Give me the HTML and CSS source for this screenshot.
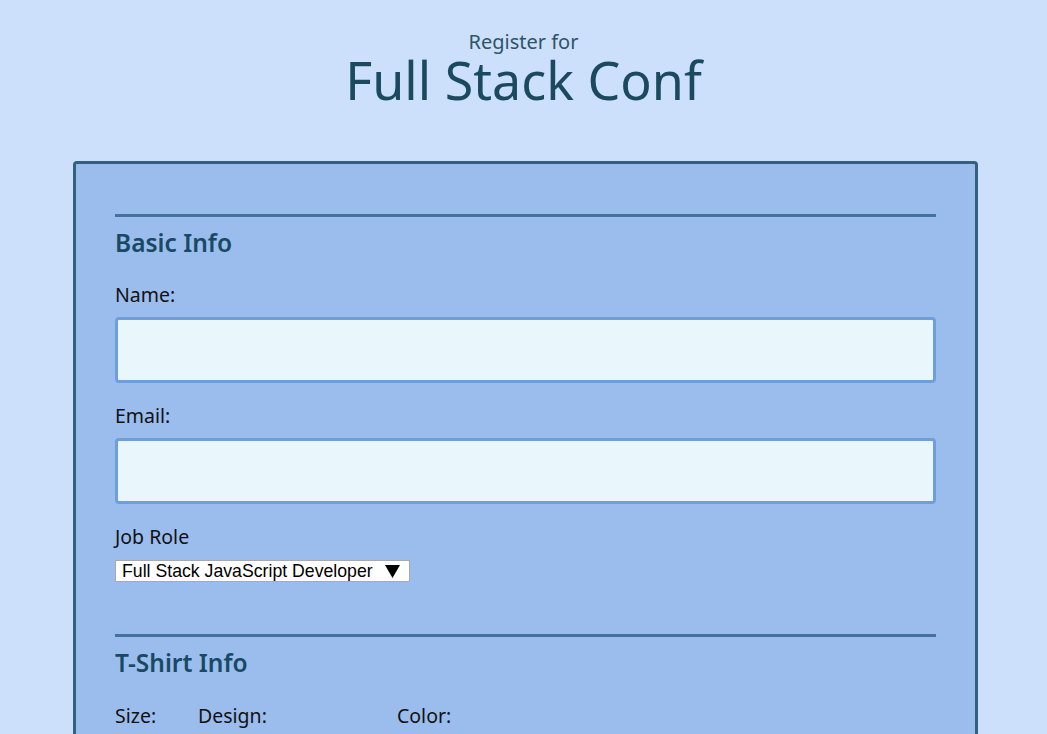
FILE: index.html
```html
<!DOCTYPE html>
<html lang="en">
<head>
<meta charset="utf-8">
<title>Register for Full Stack Conf</title>
<link rel="stylesheet" href="styles.css">
</head>
<body>
<header class="header">
  <span class="header-sub">Register for</span>
  <h1 class="header-title">Full Stack Conf</h1>
</header>
<form class="form">
  <fieldset class="section">
    <h2 class="section-title">Basic Info</h2>
    <label class="label" for="name">Name:</label>
    <input class="text-input" id="name" type="text">
    <label class="label" for="email">Email:</label>
    <input class="text-input" id="email" type="email">
    <label class="label" for="title">Job Role</label>
    <div class="select-box">
      <span class="select-text">Full Stack JavaScript Developer</span>
      <svg class="select-arrow" width="15" height="13" viewBox="0 0 15 13" aria-hidden="true"><path d="M0 0H15L7.5 13Z" fill="#000"/></svg>
    </div>
  </fieldset>
  <fieldset class="section">
    <h2 class="section-title">T-Shirt Info</h2>
    <div class="shirt-row">
      <span class="label shirt-size">Size:</span>
      <span class="label shirt-design">Design:</span>
      <span class="label shirt-color">Color:</span>
    </div>
  </fieldset>
</form>
</body>
</html>
```
FILE: styles.css
```css
html, body {
  margin: 0;
  padding: 0;
}
body {
  background: #cce0fb;
  font-family: "Noto Sans", "Lato", sans-serif;
  color: #000;
}
.header {
  display: flex;
  flex-direction: column;
  align-items: center;
  padding-top: 30px;
  color: #1f4b5e;
}
.header-sub {
  font-size: 20px;
  line-height: 24px;
  color: #2e5466;
}
.header-title {
  margin: 0;
  font-weight: 400;
  font-size: 52px;
  line-height: 52px;
  color: #1b4a5e;
}
.form {
  margin: 55px 69px 0 73px;
  background: #9bbdee;
  border: 3px solid #33607f;
  border-bottom: none;
  border-radius: 4px 4px 0 0;
  padding: 50px 39px 80px;
}
.section {
  border: none;
  border-top: 3px solid #44729a;
  margin: 0 0 52px;
  padding: 0;
}
.section-title {
  margin: 11px 0 25px;
  font-size: 24.5px;
  line-height: 30px;
  font-weight: 600;
  color: #184a63;
}
.label {
  display: block;
  font-size: 19.5px;
  line-height: 24px;
  color: #111;
}
.text-input {
  display: block;
  box-sizing: border-box;
  width: 100%;
  height: 66px;
  margin: 10px 0 21px;
  border: 3px solid #6f9fdb;
  border-radius: 4px;
  background: #e9f6fc;
}
.select-box {
  display: inline-flex;
  align-items: center;
  gap: 12px;
  margin-top: 11px;
  height: 22px;
  box-sizing: border-box;
  padding: 0 9px 0 6px;
  background: #fff;
  border: 1px solid #a9a9a9;
  font-family: "Liberation Sans", Arial, sans-serif;
  font-size: 17.7px;
  line-height: 20px;
  color: #000;
}
.select-arrow {
  display: block;
}
.shirt-row {
  display: flex;
  margin-top: 26px;
}
.shirt-size {
  width: 83px;
}
.shirt-design {
  width: 199px;
}
```
